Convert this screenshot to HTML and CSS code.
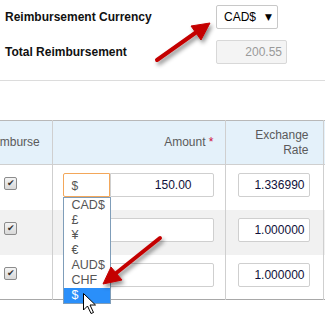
FILE: index.html
```html
<!DOCTYPE html>
<html>
<head>
<meta charset="utf-8">
<link rel="stylesheet" href="styles.css">
</head>
<body>
<div class="page">
  <div class="summary">
    <div class="srow">
      <div class="label">Reimbursement Currency</div>
      <div class="select-box"><span>CAD$</span><span class="caret">&#9660;</span></div>
    </div>
    <div class="srow">
      <div class="label">Total Reimbursement</div>
      <div class="total">200.55</div>
    </div>
  </div>
  <div class="rule"></div>
  <div class="table-wrap">
    <table class="grid">
      <thead>
        <tr>
          <th class="c1 center">Reimburse</th>
          <th class="c2">Amount <span class="req">*</span></th>
          <th class="c3">Exchange<br>Rate</th>
          <th class="c4"></th>
        </tr>
      </thead>
      <tbody>
        <tr>
          <td class="c1"><span class="chk">&#10004;</span></td>
          <td class="c2">
            <div class="amount">
              <div class="cur focus">$</div>
              <div class="amt">150.00</div>
              <ul class="menu">
                <li>CAD$</li>
                <li>£</li>
                <li>¥</li>
                <li>€</li>
                <li>AUD$</li>
                <li>CHF</li>
                <li class="sel">$</li>
              </ul>
            </div>
          </td>
          <td class="c3"><div class="rate">1.336990</div></td>
          <td class="c4"></td>
        </tr>
        <tr class="alt">
          <td class="c1"><span class="chk">&#10004;</span></td>
          <td class="c2"><div class="amount"><div class="cur">$</div><div class="amt"></div></div></td>
          <td class="c3"><div class="rate">1.000000</div></td>
          <td class="c4"></td>
        </tr>
        <tr>
          <td class="c1"><span class="chk">&#10004;</span></td>
          <td class="c2"><div class="amount"><div class="cur">$</div><div class="amt"></div></div></td>
          <td class="c3"><div class="rate">1.000000</div></td>
          <td class="c4"></td>
        </tr>
      </tbody>
    </table>
  </div>
  <svg class="overlay" width="325" height="317" viewBox="0 0 325 317">
    <defs>
      <filter id="sh" x="-20%" y="-20%" width="160%" height="160%">
        <feDropShadow dx="2" dy="3" stdDeviation="2" flood-color="#000" flood-opacity="0.45"/>
      </filter>
    </defs>
    <g filter="url(#sh)" fill="#c40000" stroke="#c40000">
      <line x1="157" y1="60" x2="198" y2="31" stroke-width="4" stroke-linecap="round"/>
      <polygon points="210,23 201,40 191,26" stroke-width="1" stroke-linejoin="round"/>
      <line x1="160" y1="238" x2="115" y2="274" stroke-width="4" stroke-linecap="round"/>
      <polygon points="103,284 111,267 122,280" stroke-width="1" stroke-linejoin="round"/>
    </g>
    <path d="M83.5 293.5 L83.5 310 L87.5 306 L91 313.5 L93.5 312.5 L90 305 L95.5 305 Z" fill="#fff" stroke="#000" stroke-width="1" stroke-linejoin="round"/>
  </svg>
</div>
</body>
</html>
```

FILE: styles.css
```css
html, body {
  margin: 0;
  padding: 0;
  background: #fff;
}
body {
  font-family: "Liberation Sans", Arial, sans-serif;
  font-size: 12px;
  color: #222;
}
.page {
  position: relative;
  width: 325px;
  height: 317px;
  overflow: hidden;
}
.summary {
  padding-top: 5px;
  display: flex;
  flex-direction: column;
  gap: 11px;
}
.srow {
  display: flex;
  align-items: center;
  height: 24px;
}
.label {
  width: 216px;
  padding-left: 5px;
  box-sizing: border-box;
  font-weight: bold;
  color: #111;
}
.select-box {
  width: 62px;
  height: 24px;
  box-sizing: border-box;
  border: 1px solid #c8c8c8;
  border-radius: 2px;
  background: #fff;
  display: flex;
  align-items: center;
  justify-content: space-between;
  padding: 0 5px 0 7px;
  color: #000;
}
.caret {
  font-family: "DejaVu Sans", sans-serif;
  font-size: 9px;
}
.total {
  width: 71px;
  height: 24px;
  box-sizing: border-box;
  border: 1px solid #d8d8d8;
  border-radius: 2px;
  background: #f4f4f4;
  color: #9a9a9a;
  text-align: right;
  padding-right: 4px;
  line-height: 22px;
}
.rule {
  margin-top: 16px;
  height: 1px;
  background: #dcdcdc;
}
.table-wrap {
  margin-top: 39px;
  margin-left: -30px;
}
.grid {
  border-collapse: collapse;
  table-layout: fixed;
  width: 403px;
  border-top: 1px solid #b8b8b8;
  border-bottom: 1px solid #a8a8a8;
}
.grid th,
.grid td {
  box-sizing: border-box;
}
.grid th {
  background: #e4f1fa;
  color: #5a5a5a;
  font-weight: normal;
  height: 44px;
  padding: 0 11px 0 0;
  text-align: right;
  line-height: 15px;
  border-left: 1px solid #cfcfcf;
  border-bottom: 1px solid #cfcfcf;
  vertical-align: middle;
}
.grid th.center {
  text-align: center;
  padding: 0;
}
.grid th.c3 {
  padding-right: 14px;
}
.grid td {
  height: 45px;
  padding: 8px 0 0 0;
  vertical-align: top;
  border-left: 1px solid #cfcfcf;
}
.grid tr.alt td {
  background: #f1f1f1;
}
.grid .c1 { width: 82px; border-left: none; }
.grid .c2 { width: 173px; }
.grid .c3 { width: 98px; }
.grid .c4 { width: 50px; }
.req {
  color: #d01040;
}
td.c1 {
  text-align: center;
}
.chk {
  display: inline-block;
  width: 11px;
  height: 11px;
  margin-top: 4px;
  border: 1px solid #8c8c8c;
  border-radius: 2px;
  background: linear-gradient(#f4f4f4, #d8d8d8);
  color: #333;
  font-size: 9px;
  line-height: 11px;
  text-align: center;
  box-sizing: content-box;
}
.amount {
  position: relative;
  display: flex;
  margin-left: 10px;
  width: 151px;
  height: 24px;
}
.cur {
  width: 47px;
  height: 24px;
  box-sizing: border-box;
  border: 1px solid #cfcfcf;
  border-right: none;
  border-radius: 2px 0 0 2px;
  padding-left: 8px;
  line-height: 24px;
  color: #555;
  background: #fff;
}
.cur.focus {
  border: 1px solid #f3a75a;
}
.amt {
  flex: 1;
  height: 24px;
  box-sizing: border-box;
  border: 1px solid #cfcfcf;
  border-radius: 0 2px 2px 0;
  background: #fff;
  text-align: right;
  padding-right: 21px;
  line-height: 22px;
  color: #10103a;
}
.rate {
  margin-left: 12px;
  width: 72px;
  height: 24px;
  box-sizing: border-box;
  border: 1px solid #cfcfcf;
  border-radius: 2px;
  background: #fff;
  text-align: right;
  padding-right: 4px;
  line-height: 22px;
  color: #10103a;
}
.menu {
  position: absolute;
  left: 0;
  top: 24px;
  width: 48px;
  margin: 0;
  padding: 0;
  list-style: none;
  box-sizing: border-box;
  border: 1px solid #7f9db9;
  background: #fff;
  z-index: 2;
}
.menu li {
  height: 15px;
  line-height: 15px;
  padding-left: 8px;
  color: #555;
  font-size: 12.5px;
}
.menu li.sel {
  background: #2a8ffa;
  color: #fff;
}
.overlay {
  position: absolute;
  left: 0;
  top: 0;
  z-index: 5;
  pointer-events: none;
}
```
